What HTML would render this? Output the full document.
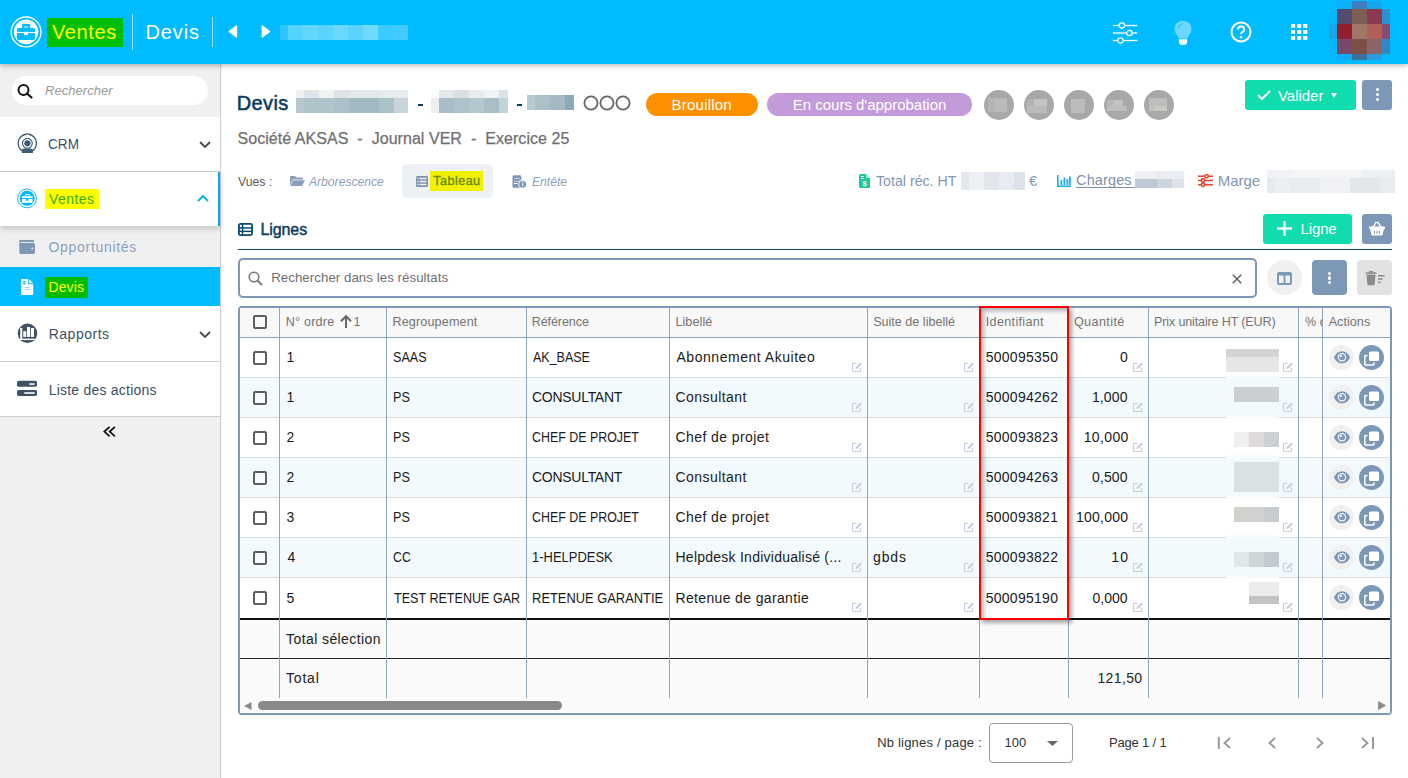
<!DOCTYPE html><html><head><meta charset="utf-8"><style>
html,body{margin:0;padding:0;width:1408px;height:778px;overflow:hidden;background:#fff;font-family:"Liberation Sans",sans-serif;}
.a{position:absolute;box-sizing:border-box;}
.t{position:absolute;white-space:nowrap;}
svg.a{overflow:visible}
</style></head><body><div class="a" style="left:0px;top:64px;width:220px;height:714px;background:#F0F0F0;"></div>
<div class="a" style="left:220px;top:64px;width:1px;height:714px;background:#CFCFCF;box-shadow:1px 0 2px rgba(0,0,0,0.06)"></div>
<div class="a" style="left:12px;top:76px;width:196px;height:29px;background:#fff;border-radius:15px"></div>
<svg class="a" style="left:17px;top:84px" width="16" height="14" viewBox="0 0 16 14"><circle cx="6.5" cy="6" r="5" fill="none" stroke="#111" stroke-width="2"/><line x1="10" y1="9.5" x2="14.5" y2="13.5" stroke="#111" stroke-width="2.2" stroke-linecap="round"/></svg>
<div class="t" style="left:45.00px;top:84.20px;font-size:13px;line-height:13px;color:#9A9A9A;font-weight:400;font-style:italic;letter-spacing:0.056px;">Rechercher</div>
<div class="a" style="left:0px;top:117px;width:220px;height:54px;background:#fff;"></div>
<div class="a" style="left:0px;top:171px;width:220px;height:1px;background:#CFCFCF;"></div>
<svg class="a" style="left:17px;top:133px" width="21" height="21" viewBox="0 0 21 21"><circle cx="10.3" cy="10.2" r="9.2" fill="none" stroke="#3F5666" stroke-width="1.3"/><circle cx="10.4" cy="10.3" r="4.9" fill="none" stroke="#3F5666" stroke-width="1.1"/><circle cx="10.4" cy="10.3" r="3.1" fill="#3F5E75"/><path d="M4.8 20 L4.8 17.6 Q4.8 15.4 7 15.4 L13.8 15.4 Q16 15.4 16 17.6 L16 20 Z" fill="#3F5E75"/><path d="M10.3 1 Q11.5 3 10.3 5.2" fill="none" stroke="#fff" stroke-width="0.9"/></svg>
<div class="t" style="left:48.30px;top:137.35px;font-size:14px;line-height:14px;color:#3C5064;font-weight:400;font-style:normal;letter-spacing:0.000px;transform:scaleX(0.9700);transform-origin:1px 0;">CRM</div>
<svg class="a" style="left:199px;top:141px" width="12" height="7" viewBox="0 0 12 7"><polyline points="1,1 6,6 11,1" fill="none" stroke="#3E4B57" stroke-width="1.8"/></svg>
<div class="a" style="left:0px;top:172px;width:220px;height:54px;background:#fff;box-shadow:0 3px 6px rgba(0,0,0,0.18)"></div>
<div class="a" style="left:218px;top:172px;width:2px;height:54px;background:#00AEEF;"></div>
<svg class="a" style="left:17px;top:188px" width="21" height="21" viewBox="0 0 21 21"><circle cx="10" cy="10.4" r="9.4" fill="none" stroke="#1AB8F8" stroke-width="1"/><circle cx="10.2" cy="10.35" r="7.5" fill="#00B8FF"/><rect x="5" y="8.2" width="10.6" height="1.9" fill="#fff"/><rect x="5" y="11" width="10.6" height="3.7" rx="0.5" fill="#fff"/><rect x="8.2" y="6" width="4.5" height="2.4" rx="0.8" fill="#fff"/><rect x="8.9" y="7" width="3" height="1.1" fill="#00B8FF"/><rect x="8.9" y="9.9" width="2.5" height="2.8" rx="0.5" fill="#00B8FF"/></svg>
<div class="a" style="left:45px;top:189px;width:54px;height:20px;background:#FFFF00;"></div>
<div class="t" style="left:49.00px;top:191.95px;font-size:14px;line-height:14px;color:#3DAA00;font-weight:400;font-style:normal;letter-spacing:0.440px;">Ventes</div>
<svg class="a" style="left:197px;top:194px" width="12" height="8" viewBox="0 0 12 8"><polyline points="1,7 6,2 11,7" fill="none" stroke="#00AEEF" stroke-width="1.8"/></svg>
<svg class="a" style="left:19px;top:240px" width="16" height="14" viewBox="0 0 16 14"><rect x="0.35" y="0" width="14.8" height="1.9" rx="0.8" fill="#7D97B6"/><rect x="0.35" y="3" width="15.6" height="10.9" rx="1.6" fill="#7D97B6"/><rect x="0.35" y="0.5" width="1.2" height="4" fill="#7D97B6"/><circle cx="13.2" cy="8.4" r="0.9" fill="#EAF2F6"/></svg>
<div class="t" style="left:48.50px;top:240.15px;font-size:14px;line-height:14px;color:#8AA0C0;font-weight:400;font-style:normal;letter-spacing:0.700px;">Opportunités</div>
<div class="a" style="left:0px;top:267px;width:220px;height:39px;background:#00BBFF;"></div>
<svg class="a" style="left:21px;top:279px" width="13" height="16" viewBox="0 0 13 16"><path d="M0 1 Q0 0 1 0 L7.2 0 L7.2 5.3 L12.2 5.3 L12.2 15 Q12.2 16 11.2 16 L1 16 Q0 16 0 15 Z" fill="#fff"/><path d="M8.2 0.3 L12.2 4.3 L8.2 4.3 Z" fill="#fff"/><g fill="#00BBFF"><rect x="1.8" y="2" width="3" height="1.2" rx="0.5"/><rect x="1.8" y="4.1" width="3" height="1.2" rx="0.5"/></g><g fill="#8FDDFF"><rect x="3.7" y="8" width="5.2" height="1"/><rect x="3.7" y="10" width="5.2" height="1"/></g></svg>
<div class="a" style="left:45px;top:277px;width:43px;height:21px;background:#00BB00;"></div>
<div class="t" style="left:48.50px;top:280.15px;font-size:14px;line-height:14px;color:#FFFF00;font-weight:400;font-style:normal;letter-spacing:0.100px;">Devis</div>
<div class="a" style="left:0px;top:306px;width:220px;height:55px;background:#fff;"></div>
<div class="a" style="left:0px;top:361px;width:220px;height:1px;background:#CFCFCF;"></div>
<svg class="a" style="left:17px;top:323px" width="21" height="21" viewBox="0 0 21 21"><circle cx="10.5" cy="10.3" r="9.75" fill="#3E5466"/><g fill="#fff"><rect x="3.2" y="4.9" width="2.1" height="12"/><rect x="3.2" y="15.6" width="14.4" height="1.5"/><rect x="6.3" y="8.2" width="2.9" height="5.7"/><rect x="10" y="4" width="3.1" height="9.9"/><rect x="13.9" y="5" width="3.1" height="8.9"/></g></svg>
<div class="t" style="left:48.70px;top:326.75px;font-size:14px;line-height:14px;color:#3C5064;font-weight:400;font-style:normal;letter-spacing:0.514px;">Rapports</div>
<svg class="a" style="left:199px;top:331px" width="12" height="7" viewBox="0 0 12 7"><polyline points="1,1 6,6 11,1" fill="none" stroke="#3E4B57" stroke-width="1.8"/></svg>
<div class="a" style="left:0px;top:362px;width:220px;height:54px;background:#fff;"></div>
<div class="a" style="left:0px;top:416px;width:220px;height:1px;background:#CFCFCF;"></div>
<svg class="a" style="left:17px;top:381px" width="20" height="15" viewBox="0 0 20 15"><rect x="0" y="-0.2" width="20" height="6" rx="1.6" fill="#3E5466"/><rect x="0" y="8.9" width="20" height="6" rx="1.6" fill="#3E5466"/><rect x="12.3" y="2.3" width="5.3" height="1.5" fill="#fff"/><rect x="7.3" y="11.2" width="10.3" height="1.6" fill="#fff"/></svg>
<div class="t" style="left:48.70px;top:382.55px;font-size:14px;line-height:14px;color:#3C5064;font-weight:400;font-style:normal;letter-spacing:0.219px;">Liste des actions</div>
<svg class="a" style="left:102px;top:425px" width="14" height="13" viewBox="0 0 14 13"><polyline points="7.6,1.9 2.4,6.6 7.6,11.3" fill="none" stroke="#111" stroke-width="1.8"/><polyline points="12.9,1.9 7.7,6.6 12.9,11.3" fill="none" stroke="#111" stroke-width="1.8"/></svg>
<div class="a" style="left:0px;top:0px;width:1408px;height:64px;background:#00BBFF;box-shadow:0 2px 5px rgba(0,0,0,0.25);z-index:5"></div>
<div class="a" style="left:0;top:0;width:1408px;height:64px;z-index:6">
<svg class="a" style="left:10px;top:16px" width="32" height="32" viewBox="0 0 32 32"><circle cx="16.1" cy="15.9" r="14.9" fill="none" stroke="#fff" stroke-width="1.3"/><circle cx="16.05" cy="15.85" r="12.3" fill="#fff"/><rect x="11.9" y="8" width="8.3" height="4.5" rx="1.4" fill="#00BBFF"/><rect x="13.7" y="10.1" width="4.4" height="1.8" fill="#8EE0FF"/><rect x="7" y="11.9" width="17.9" height="3.9" rx="1.4" fill="#00BBFF"/><rect x="7" y="13.5" width="17.9" height="2.3" fill="#00BBFF"/><rect x="7" y="17" width="17.9" height="6.9" rx="1.4" fill="#00BBFF"/><rect x="7" y="17" width="17.9" height="3" fill="#00BBFF"/><rect x="14" y="15.8" width="3.9" height="3.3" fill="#fff"/></svg>
<div class="a" style="left:47px;top:18px;width:76px;height:29px;background:#00BF00;"></div>
<div class="t" style="left:52.00px;top:22.07px;font-size:20px;line-height:20px;color:#FFFF00;font-weight:400;font-style:normal;letter-spacing:0.600px;">Ventes</div>
<div class="a" style="left:132px;top:14px;width:1px;height:36px;background:rgba(255,255,255,0.6);"></div>
<div class="t" style="left:145.50px;top:22.07px;font-size:20px;line-height:20px;color:#fff;font-weight:400;font-style:normal;letter-spacing:0.875px;">Devis</div>
<div class="a" style="left:212px;top:17px;width:1px;height:30px;background:rgba(255,255,255,0.6);"></div>
<svg class="a" style="left:228px;top:25px" width="10" height="13" viewBox="0 0 10 13"><path d="M8.5 1 L8.5 12 L1.2 6.5 Z" fill="#fff" stroke="#fff" stroke-width="1.4" stroke-linejoin="round"/></svg>
<svg class="a" style="left:261px;top:25px" width="10" height="13" viewBox="0 0 10 13"><path d="M1.3 1 L1.3 12 L8.6 6.5 Z" fill="#fff" stroke="#fff" stroke-width="1.4" stroke-linejoin="round"/></svg>
<div class="a" style="left:280px;top:25px;width:128px;height:15px;background:linear-gradient(90deg,#2DC4FF 0.4px 8.2px,#55D3FF 8.2px 23.1px,#62D6FF 23.1px 38.0px,#5AD3FF 38.0px 52.9px,#6AD8FF 52.9px 67.8px,#5AD3FF 67.8px 82.8px,#6FDAFF 82.8px 98.0px,#3ACAFF 98.0px 113.3px,#41CBFF 113.3px 128.2px);"></div>
<svg class="a" style="left:1112px;top:22px" width="26" height="22" viewBox="0 0 26 22"><g stroke="#fff" stroke-width="1.3" fill="none"><line x1="0.8" y1="3.5" x2="25.3" y2="3.5"/><line x1="0.8" y1="18.5" x2="25.3" y2="18.5"/></g><line x1="0.8" y1="11" x2="25.3" y2="11" stroke="#A6E6FF" stroke-width="2.2"/><g stroke="#fff" stroke-width="1.2" fill="#00BBFF"><circle cx="9.9" cy="3.5" r="2.7"/><circle cx="17.4" cy="11" r="2.7"/><circle cx="8.5" cy="18.5" r="2.7"/></g></svg>
<svg class="a" style="left:1174px;top:20px" width="18" height="26" viewBox="0 0 18 26"><path d="M9 0.7 C4.2 0.7 0.5 4.3 0.5 8.9 C0.5 12.3 2.6 14.3 4 16.6 L4.9 18.5 L13.1 18.5 L14 16.6 C15.4 14.3 17.5 12.3 17.5 8.9 C17.5 4.3 13.8 0.7 9 0.7 Z" fill="#6ED6FF"/><path d="M4.9 19.2 L13.1 19.2 L13.1 21.8 Q13.1 25 9 25 Q4.9 25 4.9 21.8 Z" fill="#fff"/><path d="M4.2 8.3 Q4.6 4.6 8.5 3.6" fill="none" stroke="#00BBFF" stroke-width="0.9" stroke-linecap="round"/></svg>
<svg class="a" style="left:1230px;top:21px" width="22" height="22" viewBox="0 0 22 22"><circle cx="11" cy="11" r="9.5" fill="none" stroke="#fff" stroke-width="2"/><path d="M7.8 8.6 Q7.8 5.6 11 5.6 Q14.2 5.6 14.2 8.4 Q14.2 10.2 12.3 11.2 Q11 11.9 11 13.3" fill="none" stroke="#fff" stroke-width="2"/><circle cx="11" cy="16.2" r="1.2" fill="#fff"/></svg>
<svg class="a" style="left:1291px;top:24px" width="17" height="16" viewBox="0 0 17 16"><rect x="0.0" y="0.0" width="4.1" height="3.9" fill="#fff"/><rect x="6.1" y="0.0" width="4.1" height="3.9" fill="#fff"/><rect x="12.2" y="0.0" width="4.1" height="3.9" fill="#fff"/><rect x="0.0" y="6.0" width="4.1" height="3.9" fill="#fff"/><rect x="6.1" y="6.0" width="4.1" height="3.9" fill="#fff"/><rect x="12.2" y="6.0" width="4.1" height="3.9" fill="#fff"/><rect x="0.0" y="12.0" width="4.1" height="3.9" fill="#fff"/><rect x="6.1" y="12.0" width="4.1" height="3.9" fill="#fff"/><rect x="12.2" y="12.0" width="4.1" height="3.9" fill="#fff"/></svg>
<div class="a" style="left:1337px;top:1px;width:15px;height:8px;background:#0AB1F6;"></div>
<div class="a" style="left:1352px;top:1px;width:15px;height:8px;background:#3A80C0;"></div>
<div class="a" style="left:1367px;top:1px;width:15px;height:8px;background:#17A6EC;"></div>
<div class="a" style="left:1329px;top:9px;width:8px;height:15px;background:#05B7FD;"></div>
<div class="a" style="left:1337px;top:9px;width:15px;height:15px;background:#554B6F;"></div>
<div class="a" style="left:1352px;top:9px;width:15px;height:15px;background:#7E5E54;"></div>
<div class="a" style="left:1367px;top:9px;width:15px;height:15px;background:#8A3B4F;"></div>
<div class="a" style="left:1382px;top:9px;width:8px;height:15px;background:#2E8FD0;"></div>
<div class="a" style="left:1329px;top:24px;width:8px;height:15px;background:#16A5EB;"></div>
<div class="a" style="left:1337px;top:24px;width:15px;height:15px;background:#921F2E;"></div>
<div class="a" style="left:1352px;top:24px;width:15px;height:15px;background:#A27569;"></div>
<div class="a" style="left:1367px;top:24px;width:15px;height:15px;background:#B05F5B;"></div>
<div class="a" style="left:1382px;top:24px;width:8px;height:15px;background:#8A4A72;"></div>
<div class="a" style="left:1329px;top:39px;width:8px;height:15px;background:#07B6FC;"></div>
<div class="a" style="left:1337px;top:39px;width:15px;height:15px;background:#7C486A;"></div>
<div class="a" style="left:1352px;top:39px;width:15px;height:15px;background:#7C5048;"></div>
<div class="a" style="left:1367px;top:39px;width:15px;height:15px;background:#8A6668;"></div>
<div class="a" style="left:1382px;top:39px;width:8px;height:15px;background:#3586C6;"></div>
<div class="a" style="left:1337px;top:54px;width:15px;height:6px;background:#10ADF2;"></div>
<div class="a" style="left:1352px;top:54px;width:15px;height:6px;background:#3D739B;"></div>
<div class="a" style="left:1367px;top:54px;width:15px;height:6px;background:#2A9BDB;"></div>
</div>
<div class="t" style="left:236.75px;top:92.77px;font-size:20px;line-height:20px;color:#0B3C5D;font-weight:400;font-style:normal;letter-spacing:0.375px;-webkit-text-stroke:0.55px #0B3C5D;">Devis</div>
<div class="a" style="left:296px;top:90px;width:112px;height:8px;background:linear-gradient(90deg,#EEF1F1 0 8px,#DEE5EA 8px 23px,#F0F3F3 23px 38px,#DDE4E8 38px 53px,#E3E8EB 53px 83px,#E6EBEE 83px 112px);"></div>
<div class="a" style="left:296px;top:98px;width:112px;height:15px;background:linear-gradient(90deg,#B6C8CE 0 8px,#B0C3CA 8px 38px,#ABC0C8 38px 53px,#A3B9C1 53px 83px,#ACC1C8 83px 98px,#C8D5DA 98px 112px);"></div>
<div class="a" style="left:418px;top:103.5px;width:5px;height:2px;background:#0B3C5D;"></div>
<div class="a" style="left:439px;top:90px;width:69px;height:8px;background:linear-gradient(90deg,#E3E8EB 0 15px,#D6DFE4 15px 30px,#E6ECEF 30px 45px,#F0F3F3 45px 60px,#D9E2E7 60px 69px);"></div>
<div class="a" style="left:431px;top:98px;width:8px;height:15px;background:#EDEEEE;"></div>
<div class="a" style="left:439px;top:98px;width:69px;height:15px;background:linear-gradient(90deg,#A8BDC8 0 15px,#AEC2CA 15px 30px,#B5C7CE 30px 45px,#AABEC6 45px 60px,#C3D3DA 60px 69px);"></div>
<div class="a" style="left:516.5px;top:103.5px;width:5px;height:2px;background:#0B3C5D;"></div>
<div class="a" style="left:527px;top:95px;width:47px;height:15px;background:linear-gradient(90deg,#B9CBD1 0 8px,#ABC0C8 8px 23px,#A4BAC3 23px 38px,#8CA9B7 38px 47px);"></div>
<svg class="a" style="left:583px;top:95px" width="16" height="16" viewBox="0 0 16 16"><circle cx="8" cy="8" r="6.6" fill="none" stroke="#666" stroke-width="1.8"/></svg>
<svg class="a" style="left:599px;top:95px" width="16" height="16" viewBox="0 0 16 16"><circle cx="8" cy="8" r="6.6" fill="none" stroke="#666" stroke-width="1.8"/></svg>
<svg class="a" style="left:615px;top:95px" width="16" height="16" viewBox="0 0 16 16"><circle cx="8" cy="8" r="6.6" fill="none" stroke="#666" stroke-width="1.8"/></svg>
<div class="a" style="left:646px;top:93px;width:112px;height:23px;background:#FF9100;border-radius:12px"></div>
<div class="t" style="left:671.60px;top:97.30px;font-size:15px;line-height:15px;color:#fff;font-weight:400;font-style:normal;letter-spacing:0.213px;">Brouillon</div>
<div class="a" style="left:767px;top:93px;width:205px;height:23px;background:#C39BDB;border-radius:12px"></div>
<div class="t" style="left:792.80px;top:97.30px;font-size:15px;line-height:15px;color:#fff;font-weight:400;font-style:normal;letter-spacing:-0.014px;">En cours d'approbation</div>
<div class="a" style="left:984px;top:90px;width:30px;height:30px;background:#A8A8A8;border-radius:50%"></div>
<div class="a" style="left:988px;top:98px;width:7px;height:14px;background:#B5B5B5;"></div>
<div class="a" style="left:995px;top:98px;width:12px;height:14px;background:#BBBBBB;"></div>
<div class="a" style="left:1024px;top:90px;width:30px;height:30px;background:#A8A8A8;border-radius:50%"></div>
<div class="a" style="left:1027px;top:99px;width:7px;height:7px;background:#B3B3B3;"></div>
<div class="a" style="left:1034px;top:99px;width:13px;height:7px;background:#C4C4C4;"></div>
<div class="a" style="left:1027px;top:106px;width:20px;height:7px;background:#BBBBBB;"></div>
<div class="a" style="left:1064px;top:90px;width:30px;height:30px;background:#A8A8A8;border-radius:50%"></div>
<div class="a" style="left:1071px;top:99px;width:7px;height:14px;background:#BBBDBF;"></div>
<div class="a" style="left:1078px;top:99px;width:7px;height:14px;background:#BDBBB8;"></div>
<div class="a" style="left:1104px;top:90px;width:30px;height:30px;background:#A8A8A8;border-radius:50%"></div>
<div class="a" style="left:1107px;top:100px;width:6px;height:6px;background:#B8B8B8;"></div>
<div class="a" style="left:1113px;top:100px;width:10px;height:6px;background:#C3C3C3;"></div>
<div class="a" style="left:1107px;top:106px;width:17px;height:5px;background:#BEC0C0;"></div>
<div class="a" style="left:1124px;top:106px;width:3px;height:5px;background:#BBBBBB;"></div>
<div class="a" style="left:1144px;top:90px;width:30px;height:30px;background:#A8A8A8;border-radius:50%"></div>
<div class="a" style="left:1149px;top:98px;width:18px;height:8px;background:#BEBEBE;"></div>
<div class="a" style="left:1149px;top:106px;width:6px;height:5px;background:#C0C2C6;"></div>
<div class="a" style="left:1155px;top:106px;width:12px;height:5px;background:#CACAC4;"></div>
<div class="a" style="left:1245px;top:80px;width:111px;height:30px;background:#10DCAE;border-radius:3px"></div>
<svg class="a" style="left:1257px;top:90px" width="14" height="10" viewBox="0 0 14 10"><polyline points="1,5 5,9 13,1" fill="none" stroke="#fff" stroke-width="2"/></svg>
<div class="t" style="left:1278.00px;top:88.10px;font-size:15px;line-height:15px;color:#fff;font-weight:400;font-style:normal;letter-spacing:-0.033px;">Valider</div>
<svg class="a" style="left:1331px;top:93px" width="6" height="5" viewBox="0 0 6 5"><path d="M0 0 L6 0 L3 5 Z" fill="#fff"/></svg>
<div class="a" style="left:1362px;top:80px;width:30px;height:30px;background:#7D97B6;border-radius:3px"></div>
<div class="a" style="left:1375.5px;top:87.8px;width:3.4px;height:3.4px;background:#fff;border-radius:50%"></div>
<div class="a" style="left:1375.5px;top:92.8px;width:3.4px;height:3.4px;background:#fff;border-radius:50%"></div>
<div class="a" style="left:1375.5px;top:97.8px;width:3.4px;height:3.4px;background:#fff;border-radius:50%"></div>
<div class="t" style="left:237.50px;top:130.86px;font-size:16px;line-height:16px;color:#6F6F6F;font-weight:400;font-style:normal;letter-spacing:0.043px;-webkit-text-stroke:0.25px #6F6F6F;">Société AKSAS&nbsp; -&nbsp; Journal VER&nbsp; -&nbsp; Exercice 25</div>
<div class="t" style="left:238.00px;top:174.80px;font-size:13px;line-height:13px;color:#5A5A5A;font-weight:400;font-style:normal;letter-spacing:0.000px;transform:scaleX(0.9429);transform-origin:0px 0;">Vues :</div>
<svg class="a" style="left:290px;top:176px" width="15" height="10" viewBox="0 0 15 10"><path d="M0 1 Q0 0 1 0 L5 0 L6.5 1.5 L12 1.5 Q13 1.5 13 2.5 L13 3.5 L3 3.5 L0 9 Z" fill="#8AA0BE"/><path d="M3.3 4.3 L15 4.3 L12 10 L0.3 10 Z" fill="#8AA0BE"/></svg>
<div class="t" style="left:309.00px;top:175.00px;font-size:13px;line-height:13px;color:#8CA0BC;font-weight:400;font-style:italic;letter-spacing:0.000px;transform:scaleX(0.9325);transform-origin:0px 0;">Arborescence</div>
<div class="a" style="left:402px;top:164px;width:91px;height:34px;background:#EDF0F5;border-radius:5px"></div>
<svg class="a" style="left:416px;top:176px" width="12" height="11" viewBox="0 0 12 11"><rect x="0" y="0" width="12" height="11" rx="1.5" fill="#7A8FAE"/><g fill="#EDF0F5"><rect x="3.5" y="1.7" width="7" height="1.6"/><rect x="3.5" y="4.7" width="7" height="1.6"/><rect x="3.5" y="7.7" width="7" height="1.6"/><rect x="1.2" y="1.7" width="1.3" height="1.6"/><rect x="1.2" y="4.7" width="1.3" height="1.6"/><rect x="1.2" y="7.7" width="1.3" height="1.6"/></g></svg>
<div class="a" style="left:430px;top:171px;width:53px;height:20px;background:#EEF200;"></div>
<div class="t" style="left:433.20px;top:175.33px;font-size:12.6px;line-height:12.6px;color:#6F8A0A;font-weight:400;font-style:normal;letter-spacing:0.467px;-webkit-text-stroke:0.35px #6F8A0A;">Tableau</div>
<svg class="a" style="left:512px;top:175px" width="15" height="13" viewBox="0 0 15 13"><rect x="0.5" y="0.2" width="8.9" height="12.5" rx="1.5" fill="#7D97B6"/><rect x="2" y="3.1" width="6" height="0.9" fill="#C9D5E3"/><rect x="2" y="5.8" width="6" height="0.9" fill="#C9D5E3"/><rect x="2" y="8" width="3.5" height="1" fill="#fff"/><circle cx="10.7" cy="9.2" r="4.4" fill="#fff"/><circle cx="10.7" cy="9.2" r="3.5" fill="#7D97B6"/><rect x="10.2" y="8.4" width="1" height="2.9" fill="#fff"/><circle cx="10.7" cy="7.2" r="0.65" fill="#fff"/></svg>
<div class="t" style="left:531.50px;top:175.00px;font-size:13px;line-height:13px;color:#8CA0BC;font-weight:400;font-style:italic;letter-spacing:0.000px;transform:scaleX(0.9324);transform-origin:0px 0;">Entête</div>
<svg class="a" style="left:859px;top:174px" width="11" height="14" viewBox="0 0 11 14"><path d="M0 1.5 Q0 0 1.5 0 L7 0 L11 4 L11 12.5 Q11 14 9.5 14 L1.5 14 Q0 14 0 12.5 Z" fill="#1DCB9A"/><path d="M7 0 L7 4 L11 4" fill="#9EEBD4"/><rect x="2" y="2" width="3" height="1" fill="#fff"/><rect x="2" y="4" width="3" height="1" fill="#fff"/><text x="5.5" y="12.3" font-size="7.5" font-weight="700" fill="#fff" text-anchor="middle" font-family="Liberation Sans">$</text></svg>
<div class="t" style="left:876.40px;top:173.30px;font-size:15px;line-height:15px;color:#8297B5;font-weight:400;font-style:normal;letter-spacing:0.000px;transform:scaleX(0.9459);transform-origin:0px 0;">Total réc. HT</div>
<div class="a" style="left:961px;top:172px;width:64px;height:18px;background:linear-gradient(90deg,#E4E7EC 0 8px,#EEF1F4 8px 23px,#E2E6EC 23px 38px,#E8EBEF 38px 53px,#DDE2E8 53px 64px);"></div>
<div class="t" style="left:1029.00px;top:173.30px;font-size:15px;line-height:15px;color:#8297B5;font-weight:400;font-style:normal;letter-spacing:0.000px;">€</div>
<svg class="a" style="left:1057px;top:175px" width="14" height="12" viewBox="0 0 14 12"><path d="M0.8 0 L0.8 11.2 L14 11.2" fill="none" stroke="#1AAEF0" stroke-width="1.6"/><rect x="3.5" y="5" width="1.8" height="5" fill="#1AAEF0"/><rect x="6.5" y="2.5" width="1.8" height="7.5" fill="#1AAEF0"/><rect x="9.5" y="4" width="1.8" height="6" fill="#1AAEF0"/><rect x="12" y="1.5" width="1.8" height="8.5" fill="#1AAEF0"/></svg>
<div class="t" style="left:1076.10px;top:173.43px;font-size:14.5px;line-height:14.5px;color:#7C93B2;font-weight:400;font-style:normal;letter-spacing:0.117px;">Charges</div>
<div class="a" style="left:1076px;top:187px;width:59px;height:1px;background:#7C93B2;"></div>
<div class="a" style="left:1135px;top:171px;width:49px;height:8px;background:linear-gradient(90deg,#EEF0F3 0 22px,#E9ECF0 22px 49px);"></div>
<div class="a" style="left:1135px;top:179px;width:49px;height:9px;background:linear-gradient(90deg,#BFC9D6 0 22px,#CCD4DE 22px 37px,#DEE3EA 37px 49px);"></div>
<svg class="a" style="left:1198px;top:174px" width="15" height="13" viewBox="0 0 15 13"><g stroke="#E8402A" stroke-width="1.5" fill="none"><line x1="0" y1="2.2" x2="15" y2="2.2"/><line x1="0" y1="6.5" x2="15" y2="6.5"/><line x1="0" y1="10.8" x2="15" y2="10.8"/><circle cx="8.5" cy="2.2" r="1.7" fill="#fff"/><circle cx="5" cy="6.5" r="1.7" fill="#fff"/><circle cx="5" cy="10.8" r="1.7" fill="#fff"/></g></svg>
<div class="t" style="left:1217.80px;top:173.30px;font-size:15px;line-height:15px;color:#8297B5;font-weight:400;font-style:normal;letter-spacing:-0.050px;">Marge</div>
<div class="a" style="left:1267px;top:170px;width:128px;height:8px;background:linear-gradient(90deg,#F0F2F5 0 25px,#F3F5F7 25px 95px,#EDF0F3 95px 128px);"></div>
<div class="a" style="left:1267px;top:178px;width:128px;height:15px;background:linear-gradient(90deg,#E6E9EE 0 8px,#ECEEF2 8px 23px,#E8EBEF 23px 53px,#EFF1F4 53px 83px,#E3E7EC 83px 113px,#E8EBEF 113px 128px);"></div>
<svg class="a" style="left:238px;top:223px" width="15" height="13" viewBox="0 0 15 13"><rect x="0.9" y="0.9" width="13.2" height="11.2" rx="1.5" fill="none" stroke="#0B4A6E" stroke-width="1.8"/><g fill="#0B4A6E"><rect x="1" y="4.2" width="13" height="1.5"/><rect x="1" y="7.6" width="13" height="1.5"/><rect x="3.8" y="1" width="1.5" height="11"/></g></svg>
<div class="t" style="left:260.50px;top:221.76px;font-size:16px;line-height:16px;color:#0B3C5D;font-weight:400;font-style:normal;letter-spacing:-0.100px;-webkit-text-stroke:0.45px #0B3C5D;">Lignes</div>
<div class="a" style="left:238px;top:248.5px;width:1154px;height:1.5px;background:#0D4A6B;"></div>
<div class="a" style="left:1263px;top:214px;width:89px;height:30px;background:#10DCAE;border-radius:3px"></div>
<svg class="a" style="left:1277px;top:221px" width="15" height="15" viewBox="0 0 15 15"><rect x="6.3" y="0" width="2.4" height="15" fill="#fff"/><rect x="0" y="6.3" width="15" height="2.4" fill="#fff"/></svg>
<div class="t" style="left:1300.60px;top:221.30px;font-size:15px;line-height:15px;color:#fff;font-weight:400;font-style:normal;letter-spacing:-0.150px;">Ligne</div>
<div class="a" style="left:1362px;top:214px;width:30px;height:30px;background:#7D97B6;border-radius:3px"></div>
<svg class="a" style="left:1369px;top:221px" width="16" height="15" viewBox="0 0 16 15"><path d="M4 6 L7.5 0.8 M12 6 L8.5 0.8" stroke="#fff" stroke-width="1.5" fill="none"/><rect x="0" y="5.5" width="16" height="2.5" rx="0.8" fill="#fff"/><path d="M1 8 L15 8 L13.3 14.5 L2.7 14.5 Z" fill="#fff"/><g fill="#7D97B6"><rect x="5" y="9.8" width="1" height="3"/><rect x="7.5" y="9.8" width="1" height="3"/><rect x="10" y="9.8" width="1" height="3"/></g></svg>
<div class="a" style="left:238px;top:258px;width:1019px;height:40px;background:#fff;border:2px solid #7D97B6;border-radius:5px"></div>
<svg class="a" style="left:248px;top:271px" width="15" height="15" viewBox="0 0 15 15"><circle cx="6" cy="6" r="4.8" fill="none" stroke="#777" stroke-width="1.6"/><line x1="9.5" y1="9.5" x2="14" y2="14" stroke="#777" stroke-width="1.8"/></svg>
<div class="t" style="left:271.20px;top:270.54px;font-size:13.3px;line-height:13.3px;color:#6F6F6F;font-weight:400;font-style:normal;letter-spacing:0.036px;">Rechercher dans les résultats</div>
<svg class="a" style="left:1232px;top:273.5px" width="10" height="10" viewBox="0 0 10 10"><path d="M0.8 0.8 L9.2 9.2 M9.2 0.8 L0.8 9.2" stroke="#555" stroke-width="1.3"/></svg>
<div class="a" style="left:1267px;top:260px;width:35px;height:35px;background:#F0F0F0;border-radius:50%"></div>
<svg class="a" style="left:1277px;top:271.5px" width="15" height="13" viewBox="0 0 15 13"><rect x="1" y="1" width="13" height="11" rx="1" fill="none" stroke="#7D97B6" stroke-width="2"/><rect x="1" y="1" width="13" height="2.5" fill="#7D97B6"/><rect x="6.6" y="1" width="1.8" height="11" fill="#7D97B6"/></svg>
<div class="a" style="left:1312px;top:260px;width:35px;height:35px;background:#7D97B6;border-radius:4px"></div>
<div class="a" style="left:1328px;top:272.1px;width:3.4px;height:3.4px;background:#fff;border-radius:50%"></div>
<div class="a" style="left:1328px;top:276.3px;width:3.4px;height:3.4px;background:#fff;border-radius:50%"></div>
<div class="a" style="left:1328px;top:280.5px;width:3.4px;height:3.4px;background:#fff;border-radius:50%"></div>
<div class="a" style="left:1357px;top:260px;width:35px;height:35px;background:#E2E2E2;border-radius:4px"></div>
<svg class="a" style="left:1365px;top:271px" width="20" height="15" viewBox="0 0 20 15"><rect x="0.5" y="1.2" width="11" height="1.6" rx="0.6" fill="#8A8A8A"/><rect x="4" y="0" width="4" height="1.5" fill="#8A8A8A"/><path d="M1.5 3.5 L10.5 3.5 L9.5 14.3 L2.5 14.3 Z" fill="#8A8A8A"/><rect x="13" y="4" width="6.5" height="1.5" fill="#8A8A8A"/><rect x="13" y="7.3" width="4.5" height="1.5" fill="#8A8A8A"/><rect x="13" y="10.6" width="2.5" height="1.5" fill="#8A8A8A"/></svg>
<div class="a" style="left:238px;top:306px;width:1154px;height:409px;background:#fff;border:2px solid #7D97B6;border-radius:4px"></div>
<div class="a" style="left:240px;top:308px;width:1150px;height:29px;background:#F8F8F8;"></div>
<div class="a" style="left:240px;top:337px;width:1150px;height:1px;background:#8FA6C3;"></div>
<div class="a" style="left:240px;top:377px;width:1150px;height:1px;background:#DADEE1;"></div>
<div class="a" style="left:240px;top:378px;width:1150px;height:39px;background:#F2FAFD;"></div>
<div class="a" style="left:240px;top:417px;width:1150px;height:1px;background:#DADEE1;"></div>
<div class="a" style="left:240px;top:457px;width:1150px;height:1px;background:#DADEE1;"></div>
<div class="a" style="left:240px;top:458px;width:1150px;height:39px;background:#F2FAFD;"></div>
<div class="a" style="left:240px;top:497px;width:1150px;height:1px;background:#DADEE1;"></div>
<div class="a" style="left:240px;top:537px;width:1150px;height:1px;background:#DADEE1;"></div>
<div class="a" style="left:240px;top:538px;width:1150px;height:39px;background:#F2FAFD;"></div>
<div class="a" style="left:240px;top:577px;width:1150px;height:1px;background:#DADEE1;"></div>
<div class="a" style="left:240px;top:618px;width:1150px;height:2px;background:#111;"></div>
<div class="a" style="left:240px;top:620px;width:1150px;height:93px;background:#FAFAFA;"></div>
<div class="a" style="left:240px;top:658px;width:1150px;height:1px;background:#222;"></div>
<div class="a" style="left:279px;top:308px;width:1px;height:390px;background:#8FA6C3;"></div>
<div class="a" style="left:386px;top:308px;width:1px;height:390px;background:#8FA6C3;"></div>
<div class="a" style="left:526px;top:308px;width:1px;height:390px;background:#8FA6C3;"></div>
<div class="a" style="left:669px;top:308px;width:1px;height:390px;background:#8FA6C3;"></div>
<div class="a" style="left:867px;top:308px;width:1px;height:390px;background:#8FA6C3;"></div>
<div class="a" style="left:979px;top:308px;width:1px;height:390px;background:#8FA6C3;"></div>
<div class="a" style="left:1068px;top:308px;width:1px;height:390px;background:#8FA6C3;"></div>
<div class="a" style="left:1148px;top:308px;width:1px;height:390px;background:#8FA6C3;"></div>
<div class="a" style="left:1298px;top:308px;width:1px;height:390px;background:#8FA6C3;"></div>
<div class="a" style="left:1322px;top:308px;width:1px;height:390px;background:#8FA6C3;"></div>
<div class="a" style="left:253px;top:315px;width:14px;height:14px;background:transparent;border:2px solid #5F5F5F;border-radius:2px"></div>
<div class="t" style="left:285.70px;top:315.83px;font-size:12.6px;line-height:12.6px;color:#737373;font-weight:400;font-style:normal;letter-spacing:0.214px;">N° ordre</div>
<svg class="a" style="left:340px;top:315px" width="12" height="13" viewBox="0 0 12 13"><path d="M6 1.2 L6 13 M1 6.2 L6 1.2 L11 6.2" fill="none" stroke="#666" stroke-width="2"/></svg>
<div class="t" style="left:353.50px;top:315.83px;font-size:12.6px;line-height:12.6px;color:#737373;font-weight:400;font-style:normal;letter-spacing:0.000px;">1</div>
<div class="t" style="left:392.50px;top:315.83px;font-size:12.6px;line-height:12.6px;color:#737373;font-weight:400;font-style:normal;letter-spacing:0.136px;">Regroupement</div>
<div class="t" style="left:531.70px;top:315.83px;font-size:12.6px;line-height:12.6px;color:#737373;font-weight:400;font-style:normal;letter-spacing:-0.112px;">Référence</div>
<div class="t" style="left:675.40px;top:315.83px;font-size:12.6px;line-height:12.6px;color:#737373;font-weight:400;font-style:normal;letter-spacing:0.083px;">Libellé</div>
<div class="t" style="left:873.20px;top:315.83px;font-size:12.6px;line-height:12.6px;color:#737373;font-weight:400;font-style:normal;letter-spacing:-0.007px;">Suite de libellé</div>
<div class="t" style="left:985.80px;top:315.83px;font-size:12.6px;line-height:12.6px;color:#737373;font-weight:400;font-style:normal;letter-spacing:0.320px;">Identifiant</div>
<div class="t" style="left:1073.90px;top:315.83px;font-size:12.6px;line-height:12.6px;color:#737373;font-weight:400;font-style:normal;letter-spacing:0.400px;">Quantité</div>
<div class="t" style="left:1154.10px;top:315.83px;font-size:12.6px;line-height:12.6px;color:#737373;font-weight:400;font-style:normal;letter-spacing:-0.167px;">Prix unitaire HT (EUR)</div>
<div class="a" style="left:1299px;top:308px;width:23px;height:29px;overflow:hidden">
<div class="t" style="left:6.00px;top:7.83px;font-size:12.6px;line-height:12.6px;color:#737373;font-weight:400;font-style:normal;letter-spacing:0.000px;">% de</div>
</div>
<div class="t" style="left:1328.70px;top:315.83px;font-size:12.6px;line-height:12.6px;color:#737373;font-weight:400;font-style:normal;letter-spacing:0.033px;">Actions</div>
<div class="a" style="left:1226px;top:375px;width:53px;height:4px;background:#F8FBFC;"></div>
<div class="a" style="left:1226px;top:415px;width:53px;height:4px;background:#F8FBFC;"></div>
<div class="a" style="left:1226px;top:455px;width:53px;height:4px;background:#F8FBFC;"></div>
<div class="a" style="left:1226px;top:495px;width:53px;height:4px;background:#F8FBFC;"></div>
<div class="a" style="left:1226px;top:535px;width:53px;height:4px;background:#F8FBFC;"></div>
<div class="a" style="left:1226px;top:575px;width:53px;height:4px;background:#F8FBFC;"></div>
<div class="a" style="left:253px;top:350.5px;width:14px;height:14px;background:transparent;border:2px solid #5F5F5F;border-radius:2px"></div>
<div class="t" style="left:286.40px;top:350.15px;font-size:14px;line-height:14px;color:#1A1A1A;font-weight:400;font-style:normal;letter-spacing:0.000px;">1</div>
<div class="t" style="left:392.70px;top:350.15px;font-size:14px;line-height:14px;color:#1A1A1A;font-weight:400;font-style:normal;letter-spacing:0.000px;transform:scaleX(0.8972);transform-origin:1px 0;">SAAS</div>
<div class="t" style="left:533.00px;top:350.15px;font-size:14px;line-height:14px;color:#1A1A1A;font-weight:400;font-style:normal;letter-spacing:0.000px;transform:scaleX(0.8921);transform-origin:0px 0;">AK_BASE</div>
<div class="t" style="left:676.50px;top:350.15px;font-size:14px;line-height:14px;color:#1A1A1A;font-weight:400;font-style:normal;letter-spacing:0.529px;">Abonnement Akuiteo</div>
<div class="t" style="left:985.70px;top:350.15px;font-size:14px;line-height:14px;color:#1A1A1A;font-weight:400;font-style:normal;letter-spacing:0.275px;">500095350</div>
<div class="t" style="left:1120.00px;top:350.15px;font-size:14px;line-height:14px;color:#1A1A1A;font-weight:400;font-style:normal;letter-spacing:0.000px;">0</div>
<svg class="a" style="left:852px;top:362px" width="10" height="10" viewBox="0 0 10 10"><path d="M8.5 5.5 L8.5 9 Q8.5 9.5 8 9.5 L1 9.5 Q0.5 9.5 0.5 9 L0.5 2 Q0.5 1.5 1 1.5 L4.5 1.5" fill="none" stroke="#C5CFDB" stroke-width="1.1"/><path d="M3.5 7 L3.8 5 L8.3 0.5 L9.9 2.1 L5.4 6.6 Z" fill="#C5CFDB"/></svg>
<svg class="a" style="left:964px;top:362px" width="10" height="10" viewBox="0 0 10 10"><path d="M8.5 5.5 L8.5 9 Q8.5 9.5 8 9.5 L1 9.5 Q0.5 9.5 0.5 9 L0.5 2 Q0.5 1.5 1 1.5 L4.5 1.5" fill="none" stroke="#C5CFDB" stroke-width="1.1"/><path d="M3.5 7 L3.8 5 L8.3 0.5 L9.9 2.1 L5.4 6.6 Z" fill="#C5CFDB"/></svg>
<svg class="a" style="left:1133px;top:362px" width="10" height="10" viewBox="0 0 10 10"><path d="M8.5 5.5 L8.5 9 Q8.5 9.5 8 9.5 L1 9.5 Q0.5 9.5 0.5 9 L0.5 2 Q0.5 1.5 1 1.5 L4.5 1.5" fill="none" stroke="#C5CFDB" stroke-width="1.1"/><path d="M3.5 7 L3.8 5 L8.3 0.5 L9.9 2.1 L5.4 6.6 Z" fill="#C5CFDB"/></svg>
<svg class="a" style="left:1283px;top:362px" width="10" height="10" viewBox="0 0 10 10"><path d="M8.5 5.5 L8.5 9 Q8.5 9.5 8 9.5 L1 9.5 Q0.5 9.5 0.5 9 L0.5 2 Q0.5 1.5 1 1.5 L4.5 1.5" fill="none" stroke="#C5CFDB" stroke-width="1.1"/><path d="M3.5 7 L3.8 5 L8.3 0.5 L9.9 2.1 L5.4 6.6 Z" fill="#C5CFDB"/></svg>
<div class="a" style="left:1226px;top:349px;width:53px;height:8px;background:#D5D4D5;"></div>
<div class="a" style="left:1226px;top:357px;width:53px;height:15px;background:#E6E6E7;"></div>
<div class="a" style="left:1329px;top:345px;width:25px;height:25px;background:#F0F0F0;border-radius:50%"></div>
<svg class="a" style="left:1334px;top:351px" width="16" height="13" viewBox="0 0 16 13"><path d="M0 6.3 C3 -1.8 13 -1.8 16 6.3 C13 14.4 3 14.4 0 6.3 Z" fill="#7D97B6"/><circle cx="8" cy="6.3" r="4.2" fill="#fff" fill-opacity="0.9"/><circle cx="8" cy="6.3" r="3" fill="#7D97B6"/><path d="M5.6 6 A2.6 2.6 0 0 1 7.8 3.7 L7.8 6 Z" fill="#fff" fill-opacity="0.9"/></svg>
<div class="a" style="left:1359px;top:345px;width:25px;height:25px;background:#7D97B6;border-radius:50%"></div>
<svg class="a" style="left:1364px;top:350.5px" width="16" height="15" viewBox="0 0 16 15"><rect x="5" y="0.5" width="10" height="9.5" rx="1.5" fill="#fff"/><path d="M3.5 4.5 L1.8 4.5 Q0.8 4.5 0.8 5.5 L0.8 13 Q0.8 14 1.8 14 L9 14 Q10 14 10 13 L10 11.5" fill="none" stroke="#fff" stroke-width="1.6"/></svg>
<div class="a" style="left:253px;top:390.5px;width:14px;height:14px;background:transparent;border:2px solid #5F5F5F;border-radius:2px"></div>
<div class="t" style="left:286.40px;top:390.15px;font-size:14px;line-height:14px;color:#1A1A1A;font-weight:400;font-style:normal;letter-spacing:0.000px;">1</div>
<div class="t" style="left:392.70px;top:390.15px;font-size:14px;line-height:14px;color:#1A1A1A;font-weight:400;font-style:normal;letter-spacing:0.000px;transform:scaleX(0.9000);transform-origin:1px 0;">PS</div>
<div class="t" style="left:532.00px;top:390.15px;font-size:14px;line-height:14px;color:#1A1A1A;font-weight:400;font-style:normal;letter-spacing:-0.278px;">CONSULTANT</div>
<div class="t" style="left:675.50px;top:390.15px;font-size:14px;line-height:14px;color:#1A1A1A;font-weight:400;font-style:normal;letter-spacing:0.444px;">Consultant</div>
<div class="t" style="left:985.70px;top:390.15px;font-size:14px;line-height:14px;color:#1A1A1A;font-weight:400;font-style:normal;letter-spacing:0.275px;">500094262</div>
<div class="t" style="left:1091.90px;top:390.15px;font-size:14px;line-height:14px;color:#1A1A1A;font-weight:400;font-style:normal;letter-spacing:0.150px;">1,000</div>
<svg class="a" style="left:852px;top:402px" width="10" height="10" viewBox="0 0 10 10"><path d="M8.5 5.5 L8.5 9 Q8.5 9.5 8 9.5 L1 9.5 Q0.5 9.5 0.5 9 L0.5 2 Q0.5 1.5 1 1.5 L4.5 1.5" fill="none" stroke="#C5CFDB" stroke-width="1.1"/><path d="M3.5 7 L3.8 5 L8.3 0.5 L9.9 2.1 L5.4 6.6 Z" fill="#C5CFDB"/></svg>
<svg class="a" style="left:964px;top:402px" width="10" height="10" viewBox="0 0 10 10"><path d="M8.5 5.5 L8.5 9 Q8.5 9.5 8 9.5 L1 9.5 Q0.5 9.5 0.5 9 L0.5 2 Q0.5 1.5 1 1.5 L4.5 1.5" fill="none" stroke="#C5CFDB" stroke-width="1.1"/><path d="M3.5 7 L3.8 5 L8.3 0.5 L9.9 2.1 L5.4 6.6 Z" fill="#C5CFDB"/></svg>
<svg class="a" style="left:1133px;top:402px" width="10" height="10" viewBox="0 0 10 10"><path d="M8.5 5.5 L8.5 9 Q8.5 9.5 8 9.5 L1 9.5 Q0.5 9.5 0.5 9 L0.5 2 Q0.5 1.5 1 1.5 L4.5 1.5" fill="none" stroke="#C5CFDB" stroke-width="1.1"/><path d="M3.5 7 L3.8 5 L8.3 0.5 L9.9 2.1 L5.4 6.6 Z" fill="#C5CFDB"/></svg>
<svg class="a" style="left:1283px;top:402px" width="10" height="10" viewBox="0 0 10 10"><path d="M8.5 5.5 L8.5 9 Q8.5 9.5 8 9.5 L1 9.5 Q0.5 9.5 0.5 9 L0.5 2 Q0.5 1.5 1 1.5 L4.5 1.5" fill="none" stroke="#C5CFDB" stroke-width="1.1"/><path d="M3.5 7 L3.8 5 L8.3 0.5 L9.9 2.1 L5.4 6.6 Z" fill="#C5CFDB"/></svg>
<div class="a" style="left:1234px;top:387px;width:45px;height:15px;background:#C9CFD3;"></div>
<div class="a" style="left:1329px;top:385px;width:25px;height:25px;background:#F0F0F0;border-radius:50%"></div>
<svg class="a" style="left:1334px;top:391px" width="16" height="13" viewBox="0 0 16 13"><path d="M0 6.3 C3 -1.8 13 -1.8 16 6.3 C13 14.4 3 14.4 0 6.3 Z" fill="#7D97B6"/><circle cx="8" cy="6.3" r="4.2" fill="#fff" fill-opacity="0.9"/><circle cx="8" cy="6.3" r="3" fill="#7D97B6"/><path d="M5.6 6 A2.6 2.6 0 0 1 7.8 3.7 L7.8 6 Z" fill="#fff" fill-opacity="0.9"/></svg>
<div class="a" style="left:1359px;top:385px;width:25px;height:25px;background:#7D97B6;border-radius:50%"></div>
<svg class="a" style="left:1364px;top:390.5px" width="16" height="15" viewBox="0 0 16 15"><rect x="5" y="0.5" width="10" height="9.5" rx="1.5" fill="#fff"/><path d="M3.5 4.5 L1.8 4.5 Q0.8 4.5 0.8 5.5 L0.8 13 Q0.8 14 1.8 14 L9 14 Q10 14 10 13 L10 11.5" fill="none" stroke="#fff" stroke-width="1.6"/></svg>
<div class="a" style="left:253px;top:430.5px;width:14px;height:14px;background:transparent;border:2px solid #5F5F5F;border-radius:2px"></div>
<div class="t" style="left:286.40px;top:430.15px;font-size:14px;line-height:14px;color:#1A1A1A;font-weight:400;font-style:normal;letter-spacing:0.000px;">2</div>
<div class="t" style="left:392.70px;top:430.15px;font-size:14px;line-height:14px;color:#1A1A1A;font-weight:400;font-style:normal;letter-spacing:0.000px;transform:scaleX(0.9000);transform-origin:1px 0;">PS</div>
<div class="t" style="left:532.00px;top:430.15px;font-size:14px;line-height:14px;color:#1A1A1A;font-weight:400;font-style:normal;letter-spacing:0.000px;transform:scaleX(0.8857);transform-origin:1px 0;">CHEF DE PROJET</div>
<div class="t" style="left:675.50px;top:430.15px;font-size:14px;line-height:14px;color:#1A1A1A;font-weight:400;font-style:normal;letter-spacing:0.415px;">Chef de projet</div>
<div class="t" style="left:985.70px;top:430.15px;font-size:14px;line-height:14px;color:#1A1A1A;font-weight:400;font-style:normal;letter-spacing:0.275px;">500093823</div>
<div class="t" style="left:1083.70px;top:430.15px;font-size:14px;line-height:14px;color:#1A1A1A;font-weight:400;font-style:normal;letter-spacing:0.360px;">10,000</div>
<svg class="a" style="left:852px;top:442px" width="10" height="10" viewBox="0 0 10 10"><path d="M8.5 5.5 L8.5 9 Q8.5 9.5 8 9.5 L1 9.5 Q0.5 9.5 0.5 9 L0.5 2 Q0.5 1.5 1 1.5 L4.5 1.5" fill="none" stroke="#C5CFDB" stroke-width="1.1"/><path d="M3.5 7 L3.8 5 L8.3 0.5 L9.9 2.1 L5.4 6.6 Z" fill="#C5CFDB"/></svg>
<svg class="a" style="left:964px;top:442px" width="10" height="10" viewBox="0 0 10 10"><path d="M8.5 5.5 L8.5 9 Q8.5 9.5 8 9.5 L1 9.5 Q0.5 9.5 0.5 9 L0.5 2 Q0.5 1.5 1 1.5 L4.5 1.5" fill="none" stroke="#C5CFDB" stroke-width="1.1"/><path d="M3.5 7 L3.8 5 L8.3 0.5 L9.9 2.1 L5.4 6.6 Z" fill="#C5CFDB"/></svg>
<svg class="a" style="left:1133px;top:442px" width="10" height="10" viewBox="0 0 10 10"><path d="M8.5 5.5 L8.5 9 Q8.5 9.5 8 9.5 L1 9.5 Q0.5 9.5 0.5 9 L0.5 2 Q0.5 1.5 1 1.5 L4.5 1.5" fill="none" stroke="#C5CFDB" stroke-width="1.1"/><path d="M3.5 7 L3.8 5 L8.3 0.5 L9.9 2.1 L5.4 6.6 Z" fill="#C5CFDB"/></svg>
<svg class="a" style="left:1283px;top:442px" width="10" height="10" viewBox="0 0 10 10"><path d="M8.5 5.5 L8.5 9 Q8.5 9.5 8 9.5 L1 9.5 Q0.5 9.5 0.5 9 L0.5 2 Q0.5 1.5 1 1.5 L4.5 1.5" fill="none" stroke="#C5CFDB" stroke-width="1.1"/><path d="M3.5 7 L3.8 5 L8.3 0.5 L9.9 2.1 L5.4 6.6 Z" fill="#C5CFDB"/></svg>
<div class="a" style="left:1234px;top:432px;width:15px;height:15px;background:#EEEFEF;"></div>
<div class="a" style="left:1249px;top:432px;width:15px;height:15px;background:#DFDBDB;"></div>
<div class="a" style="left:1264px;top:432px;width:15px;height:15px;background:#CBD0D4;"></div>
<div class="a" style="left:1329px;top:425px;width:25px;height:25px;background:#F0F0F0;border-radius:50%"></div>
<svg class="a" style="left:1334px;top:431px" width="16" height="13" viewBox="0 0 16 13"><path d="M0 6.3 C3 -1.8 13 -1.8 16 6.3 C13 14.4 3 14.4 0 6.3 Z" fill="#7D97B6"/><circle cx="8" cy="6.3" r="4.2" fill="#fff" fill-opacity="0.9"/><circle cx="8" cy="6.3" r="3" fill="#7D97B6"/><path d="M5.6 6 A2.6 2.6 0 0 1 7.8 3.7 L7.8 6 Z" fill="#fff" fill-opacity="0.9"/></svg>
<div class="a" style="left:1359px;top:425px;width:25px;height:25px;background:#7D97B6;border-radius:50%"></div>
<svg class="a" style="left:1364px;top:430.5px" width="16" height="15" viewBox="0 0 16 15"><rect x="5" y="0.5" width="10" height="9.5" rx="1.5" fill="#fff"/><path d="M3.5 4.5 L1.8 4.5 Q0.8 4.5 0.8 5.5 L0.8 13 Q0.8 14 1.8 14 L9 14 Q10 14 10 13 L10 11.5" fill="none" stroke="#fff" stroke-width="1.6"/></svg>
<div class="a" style="left:253px;top:470.5px;width:14px;height:14px;background:transparent;border:2px solid #5F5F5F;border-radius:2px"></div>
<div class="t" style="left:286.40px;top:470.15px;font-size:14px;line-height:14px;color:#1A1A1A;font-weight:400;font-style:normal;letter-spacing:0.000px;">2</div>
<div class="t" style="left:392.70px;top:470.15px;font-size:14px;line-height:14px;color:#1A1A1A;font-weight:400;font-style:normal;letter-spacing:0.000px;transform:scaleX(0.9000);transform-origin:1px 0;">PS</div>
<div class="t" style="left:532.00px;top:470.15px;font-size:14px;line-height:14px;color:#1A1A1A;font-weight:400;font-style:normal;letter-spacing:-0.278px;">CONSULTANT</div>
<div class="t" style="left:675.50px;top:470.15px;font-size:14px;line-height:14px;color:#1A1A1A;font-weight:400;font-style:normal;letter-spacing:0.444px;">Consultant</div>
<div class="t" style="left:985.70px;top:470.15px;font-size:14px;line-height:14px;color:#1A1A1A;font-weight:400;font-style:normal;letter-spacing:0.275px;">500094263</div>
<div class="t" style="left:1092.00px;top:470.15px;font-size:14px;line-height:14px;color:#1A1A1A;font-weight:400;font-style:normal;letter-spacing:0.125px;">0,500</div>
<svg class="a" style="left:852px;top:482px" width="10" height="10" viewBox="0 0 10 10"><path d="M8.5 5.5 L8.5 9 Q8.5 9.5 8 9.5 L1 9.5 Q0.5 9.5 0.5 9 L0.5 2 Q0.5 1.5 1 1.5 L4.5 1.5" fill="none" stroke="#C5CFDB" stroke-width="1.1"/><path d="M3.5 7 L3.8 5 L8.3 0.5 L9.9 2.1 L5.4 6.6 Z" fill="#C5CFDB"/></svg>
<svg class="a" style="left:964px;top:482px" width="10" height="10" viewBox="0 0 10 10"><path d="M8.5 5.5 L8.5 9 Q8.5 9.5 8 9.5 L1 9.5 Q0.5 9.5 0.5 9 L0.5 2 Q0.5 1.5 1 1.5 L4.5 1.5" fill="none" stroke="#C5CFDB" stroke-width="1.1"/><path d="M3.5 7 L3.8 5 L8.3 0.5 L9.9 2.1 L5.4 6.6 Z" fill="#C5CFDB"/></svg>
<svg class="a" style="left:1133px;top:482px" width="10" height="10" viewBox="0 0 10 10"><path d="M8.5 5.5 L8.5 9 Q8.5 9.5 8 9.5 L1 9.5 Q0.5 9.5 0.5 9 L0.5 2 Q0.5 1.5 1 1.5 L4.5 1.5" fill="none" stroke="#C5CFDB" stroke-width="1.1"/><path d="M3.5 7 L3.8 5 L8.3 0.5 L9.9 2.1 L5.4 6.6 Z" fill="#C5CFDB"/></svg>
<svg class="a" style="left:1283px;top:482px" width="10" height="10" viewBox="0 0 10 10"><path d="M8.5 5.5 L8.5 9 Q8.5 9.5 8 9.5 L1 9.5 Q0.5 9.5 0.5 9 L0.5 2 Q0.5 1.5 1 1.5 L4.5 1.5" fill="none" stroke="#C5CFDB" stroke-width="1.1"/><path d="M3.5 7 L3.8 5 L8.3 0.5 L9.9 2.1 L5.4 6.6 Z" fill="#C5CFDB"/></svg>
<div class="a" style="left:1234px;top:462px;width:45px;height:30px;background:#D9E1E4;"></div>
<div class="a" style="left:1329px;top:465px;width:25px;height:25px;background:#F0F0F0;border-radius:50%"></div>
<svg class="a" style="left:1334px;top:471px" width="16" height="13" viewBox="0 0 16 13"><path d="M0 6.3 C3 -1.8 13 -1.8 16 6.3 C13 14.4 3 14.4 0 6.3 Z" fill="#7D97B6"/><circle cx="8" cy="6.3" r="4.2" fill="#fff" fill-opacity="0.9"/><circle cx="8" cy="6.3" r="3" fill="#7D97B6"/><path d="M5.6 6 A2.6 2.6 0 0 1 7.8 3.7 L7.8 6 Z" fill="#fff" fill-opacity="0.9"/></svg>
<div class="a" style="left:1359px;top:465px;width:25px;height:25px;background:#7D97B6;border-radius:50%"></div>
<svg class="a" style="left:1364px;top:470.5px" width="16" height="15" viewBox="0 0 16 15"><rect x="5" y="0.5" width="10" height="9.5" rx="1.5" fill="#fff"/><path d="M3.5 4.5 L1.8 4.5 Q0.8 4.5 0.8 5.5 L0.8 13 Q0.8 14 1.8 14 L9 14 Q10 14 10 13 L10 11.5" fill="none" stroke="#fff" stroke-width="1.6"/></svg>
<div class="a" style="left:253px;top:510.5px;width:14px;height:14px;background:transparent;border:2px solid #5F5F5F;border-radius:2px"></div>
<div class="t" style="left:286.40px;top:510.15px;font-size:14px;line-height:14px;color:#1A1A1A;font-weight:400;font-style:normal;letter-spacing:0.000px;">3</div>
<div class="t" style="left:392.70px;top:510.15px;font-size:14px;line-height:14px;color:#1A1A1A;font-weight:400;font-style:normal;letter-spacing:0.000px;transform:scaleX(0.9000);transform-origin:1px 0;">PS</div>
<div class="t" style="left:532.00px;top:510.15px;font-size:14px;line-height:14px;color:#1A1A1A;font-weight:400;font-style:normal;letter-spacing:0.000px;transform:scaleX(0.8857);transform-origin:1px 0;">CHEF DE PROJET</div>
<div class="t" style="left:675.50px;top:510.15px;font-size:14px;line-height:14px;color:#1A1A1A;font-weight:400;font-style:normal;letter-spacing:0.415px;">Chef de projet</div>
<div class="t" style="left:985.70px;top:510.15px;font-size:14px;line-height:14px;color:#1A1A1A;font-weight:400;font-style:normal;letter-spacing:0.275px;">500093821</div>
<div class="t" style="left:1076.00px;top:510.15px;font-size:14px;line-height:14px;color:#1A1A1A;font-weight:400;font-style:normal;letter-spacing:0.250px;">100,000</div>
<svg class="a" style="left:852px;top:522px" width="10" height="10" viewBox="0 0 10 10"><path d="M8.5 5.5 L8.5 9 Q8.5 9.5 8 9.5 L1 9.5 Q0.5 9.5 0.5 9 L0.5 2 Q0.5 1.5 1 1.5 L4.5 1.5" fill="none" stroke="#C5CFDB" stroke-width="1.1"/><path d="M3.5 7 L3.8 5 L8.3 0.5 L9.9 2.1 L5.4 6.6 Z" fill="#C5CFDB"/></svg>
<svg class="a" style="left:964px;top:522px" width="10" height="10" viewBox="0 0 10 10"><path d="M8.5 5.5 L8.5 9 Q8.5 9.5 8 9.5 L1 9.5 Q0.5 9.5 0.5 9 L0.5 2 Q0.5 1.5 1 1.5 L4.5 1.5" fill="none" stroke="#C5CFDB" stroke-width="1.1"/><path d="M3.5 7 L3.8 5 L8.3 0.5 L9.9 2.1 L5.4 6.6 Z" fill="#C5CFDB"/></svg>
<svg class="a" style="left:1133px;top:522px" width="10" height="10" viewBox="0 0 10 10"><path d="M8.5 5.5 L8.5 9 Q8.5 9.5 8 9.5 L1 9.5 Q0.5 9.5 0.5 9 L0.5 2 Q0.5 1.5 1 1.5 L4.5 1.5" fill="none" stroke="#C5CFDB" stroke-width="1.1"/><path d="M3.5 7 L3.8 5 L8.3 0.5 L9.9 2.1 L5.4 6.6 Z" fill="#C5CFDB"/></svg>
<svg class="a" style="left:1283px;top:522px" width="10" height="10" viewBox="0 0 10 10"><path d="M8.5 5.5 L8.5 9 Q8.5 9.5 8 9.5 L1 9.5 Q0.5 9.5 0.5 9 L0.5 2 Q0.5 1.5 1 1.5 L4.5 1.5" fill="none" stroke="#C5CFDB" stroke-width="1.1"/><path d="M3.5 7 L3.8 5 L8.3 0.5 L9.9 2.1 L5.4 6.6 Z" fill="#C5CFDB"/></svg>
<div class="a" style="left:1234px;top:507px;width:15px;height:15px;background:#D3D1CE;"></div>
<div class="a" style="left:1249px;top:507px;width:15px;height:15px;background:#D3D0D2;"></div>
<div class="a" style="left:1264px;top:507px;width:15px;height:15px;background:#C9CCCE;"></div>
<div class="a" style="left:1329px;top:505px;width:25px;height:25px;background:#F0F0F0;border-radius:50%"></div>
<svg class="a" style="left:1334px;top:511px" width="16" height="13" viewBox="0 0 16 13"><path d="M0 6.3 C3 -1.8 13 -1.8 16 6.3 C13 14.4 3 14.4 0 6.3 Z" fill="#7D97B6"/><circle cx="8" cy="6.3" r="4.2" fill="#fff" fill-opacity="0.9"/><circle cx="8" cy="6.3" r="3" fill="#7D97B6"/><path d="M5.6 6 A2.6 2.6 0 0 1 7.8 3.7 L7.8 6 Z" fill="#fff" fill-opacity="0.9"/></svg>
<div class="a" style="left:1359px;top:505px;width:25px;height:25px;background:#7D97B6;border-radius:50%"></div>
<svg class="a" style="left:1364px;top:510.5px" width="16" height="15" viewBox="0 0 16 15"><rect x="5" y="0.5" width="10" height="9.5" rx="1.5" fill="#fff"/><path d="M3.5 4.5 L1.8 4.5 Q0.8 4.5 0.8 5.5 L0.8 13 Q0.8 14 1.8 14 L9 14 Q10 14 10 13 L10 11.5" fill="none" stroke="#fff" stroke-width="1.6"/></svg>
<div class="a" style="left:253px;top:550.5px;width:14px;height:14px;background:transparent;border:2px solid #5F5F5F;border-radius:2px"></div>
<div class="t" style="left:287.40px;top:550.15px;font-size:14px;line-height:14px;color:#1A1A1A;font-weight:400;font-style:normal;letter-spacing:0.000px;">4</div>
<div class="t" style="left:392.70px;top:550.15px;font-size:14px;line-height:14px;color:#1A1A1A;font-weight:400;font-style:normal;letter-spacing:0.000px;transform:scaleX(0.8789);transform-origin:1px 0;">CC</div>
<div class="t" style="left:532.00px;top:550.15px;font-size:14px;line-height:14px;color:#1A1A1A;font-weight:400;font-style:normal;letter-spacing:0.000px;transform:scaleX(0.9256);transform-origin:1px 0;">1-HELPDESK</div>
<div class="t" style="left:675.50px;top:550.15px;font-size:14px;line-height:14px;color:#1A1A1A;font-weight:400;font-style:normal;letter-spacing:0.246px;">Helpdesk Individualisé (...</div>
<div class="t" style="left:873.00px;top:550.15px;font-size:14px;line-height:14px;color:#1A1A1A;font-weight:400;font-style:normal;letter-spacing:0.867px;">gbds</div>
<div class="t" style="left:985.70px;top:550.15px;font-size:14px;line-height:14px;color:#1A1A1A;font-weight:400;font-style:normal;letter-spacing:0.275px;">500093822</div>
<div class="t" style="left:1111.30px;top:550.15px;font-size:14px;line-height:14px;color:#1A1A1A;font-weight:400;font-style:normal;letter-spacing:1.200px;">10</div>
<svg class="a" style="left:852px;top:562px" width="10" height="10" viewBox="0 0 10 10"><path d="M8.5 5.5 L8.5 9 Q8.5 9.5 8 9.5 L1 9.5 Q0.5 9.5 0.5 9 L0.5 2 Q0.5 1.5 1 1.5 L4.5 1.5" fill="none" stroke="#C5CFDB" stroke-width="1.1"/><path d="M3.5 7 L3.8 5 L8.3 0.5 L9.9 2.1 L5.4 6.6 Z" fill="#C5CFDB"/></svg>
<svg class="a" style="left:964px;top:562px" width="10" height="10" viewBox="0 0 10 10"><path d="M8.5 5.5 L8.5 9 Q8.5 9.5 8 9.5 L1 9.5 Q0.5 9.5 0.5 9 L0.5 2 Q0.5 1.5 1 1.5 L4.5 1.5" fill="none" stroke="#C5CFDB" stroke-width="1.1"/><path d="M3.5 7 L3.8 5 L8.3 0.5 L9.9 2.1 L5.4 6.6 Z" fill="#C5CFDB"/></svg>
<svg class="a" style="left:1133px;top:562px" width="10" height="10" viewBox="0 0 10 10"><path d="M8.5 5.5 L8.5 9 Q8.5 9.5 8 9.5 L1 9.5 Q0.5 9.5 0.5 9 L0.5 2 Q0.5 1.5 1 1.5 L4.5 1.5" fill="none" stroke="#C5CFDB" stroke-width="1.1"/><path d="M3.5 7 L3.8 5 L8.3 0.5 L9.9 2.1 L5.4 6.6 Z" fill="#C5CFDB"/></svg>
<svg class="a" style="left:1283px;top:562px" width="10" height="10" viewBox="0 0 10 10"><path d="M8.5 5.5 L8.5 9 Q8.5 9.5 8 9.5 L1 9.5 Q0.5 9.5 0.5 9 L0.5 2 Q0.5 1.5 1 1.5 L4.5 1.5" fill="none" stroke="#C5CFDB" stroke-width="1.1"/><path d="M3.5 7 L3.8 5 L8.3 0.5 L9.9 2.1 L5.4 6.6 Z" fill="#C5CFDB"/></svg>
<div class="a" style="left:1234px;top:552px;width:15px;height:15px;background:#DEE8EB;"></div>
<div class="a" style="left:1249px;top:552px;width:15px;height:15px;background:#CED5D8;"></div>
<div class="a" style="left:1264px;top:552px;width:15px;height:15px;background:#C2CBD2;"></div>
<div class="a" style="left:1329px;top:545px;width:25px;height:25px;background:#F0F0F0;border-radius:50%"></div>
<svg class="a" style="left:1334px;top:551px" width="16" height="13" viewBox="0 0 16 13"><path d="M0 6.3 C3 -1.8 13 -1.8 16 6.3 C13 14.4 3 14.4 0 6.3 Z" fill="#7D97B6"/><circle cx="8" cy="6.3" r="4.2" fill="#fff" fill-opacity="0.9"/><circle cx="8" cy="6.3" r="3" fill="#7D97B6"/><path d="M5.6 6 A2.6 2.6 0 0 1 7.8 3.7 L7.8 6 Z" fill="#fff" fill-opacity="0.9"/></svg>
<div class="a" style="left:1359px;top:545px;width:25px;height:25px;background:#7D97B6;border-radius:50%"></div>
<svg class="a" style="left:1364px;top:550.5px" width="16" height="15" viewBox="0 0 16 15"><rect x="5" y="0.5" width="10" height="9.5" rx="1.5" fill="#fff"/><path d="M3.5 4.5 L1.8 4.5 Q0.8 4.5 0.8 5.5 L0.8 13 Q0.8 14 1.8 14 L9 14 Q10 14 10 13 L10 11.5" fill="none" stroke="#fff" stroke-width="1.6"/></svg>
<div class="a" style="left:253px;top:590.5px;width:14px;height:14px;background:transparent;border:2px solid #5F5F5F;border-radius:2px"></div>
<div class="t" style="left:286.40px;top:590.85px;font-size:14px;line-height:14px;color:#1A1A1A;font-weight:400;font-style:normal;letter-spacing:0.000px;">5</div>
<div class="t" style="left:393.70px;top:590.85px;font-size:14px;line-height:14px;color:#1A1A1A;font-weight:400;font-style:normal;letter-spacing:0.000px;transform:scaleX(0.8979);transform-origin:0px 0;">TEST RETENUE GAR</div>
<div class="t" style="left:532.00px;top:590.85px;font-size:14px;line-height:14px;color:#1A1A1A;font-weight:400;font-style:normal;letter-spacing:0.000px;transform:scaleX(0.9206);transform-origin:1px 0;">RETENUE GARANTIE</div>
<div class="t" style="left:675.50px;top:590.85px;font-size:14px;line-height:14px;color:#1A1A1A;font-weight:400;font-style:normal;letter-spacing:0.350px;">Retenue de garantie</div>
<div class="t" style="left:985.70px;top:590.85px;font-size:14px;line-height:14px;color:#1A1A1A;font-weight:400;font-style:normal;letter-spacing:0.275px;">500095190</div>
<div class="t" style="left:1092.50px;top:590.85px;font-size:14px;line-height:14px;color:#1A1A1A;font-weight:400;font-style:normal;letter-spacing:0.000px;">0,000</div>
<svg class="a" style="left:852px;top:602px" width="10" height="10" viewBox="0 0 10 10"><path d="M8.5 5.5 L8.5 9 Q8.5 9.5 8 9.5 L1 9.5 Q0.5 9.5 0.5 9 L0.5 2 Q0.5 1.5 1 1.5 L4.5 1.5" fill="none" stroke="#C5CFDB" stroke-width="1.1"/><path d="M3.5 7 L3.8 5 L8.3 0.5 L9.9 2.1 L5.4 6.6 Z" fill="#C5CFDB"/></svg>
<svg class="a" style="left:964px;top:602px" width="10" height="10" viewBox="0 0 10 10"><path d="M8.5 5.5 L8.5 9 Q8.5 9.5 8 9.5 L1 9.5 Q0.5 9.5 0.5 9 L0.5 2 Q0.5 1.5 1 1.5 L4.5 1.5" fill="none" stroke="#C5CFDB" stroke-width="1.1"/><path d="M3.5 7 L3.8 5 L8.3 0.5 L9.9 2.1 L5.4 6.6 Z" fill="#C5CFDB"/></svg>
<svg class="a" style="left:1133px;top:602px" width="10" height="10" viewBox="0 0 10 10"><path d="M8.5 5.5 L8.5 9 Q8.5 9.5 8 9.5 L1 9.5 Q0.5 9.5 0.5 9 L0.5 2 Q0.5 1.5 1 1.5 L4.5 1.5" fill="none" stroke="#C5CFDB" stroke-width="1.1"/><path d="M3.5 7 L3.8 5 L8.3 0.5 L9.9 2.1 L5.4 6.6 Z" fill="#C5CFDB"/></svg>
<svg class="a" style="left:1283px;top:602px" width="10" height="10" viewBox="0 0 10 10"><path d="M8.5 5.5 L8.5 9 Q8.5 9.5 8 9.5 L1 9.5 Q0.5 9.5 0.5 9 L0.5 2 Q0.5 1.5 1 1.5 L4.5 1.5" fill="none" stroke="#C5CFDB" stroke-width="1.1"/><path d="M3.5 7 L3.8 5 L8.3 0.5 L9.9 2.1 L5.4 6.6 Z" fill="#C5CFDB"/></svg>
<div class="a" style="left:1249px;top:582px;width:30px;height:14px;background:#EDECEC;"></div>
<div class="a" style="left:1249px;top:596px;width:30px;height:8px;background:#C4C3C5;"></div>
<div class="a" style="left:1329px;top:585px;width:25px;height:25px;background:#F0F0F0;border-radius:50%"></div>
<svg class="a" style="left:1334px;top:591px" width="16" height="13" viewBox="0 0 16 13"><path d="M0 6.3 C3 -1.8 13 -1.8 16 6.3 C13 14.4 3 14.4 0 6.3 Z" fill="#7D97B6"/><circle cx="8" cy="6.3" r="4.2" fill="#fff" fill-opacity="0.9"/><circle cx="8" cy="6.3" r="3" fill="#7D97B6"/><path d="M5.6 6 A2.6 2.6 0 0 1 7.8 3.7 L7.8 6 Z" fill="#fff" fill-opacity="0.9"/></svg>
<div class="a" style="left:1359px;top:585px;width:25px;height:25px;background:#7D97B6;border-radius:50%"></div>
<svg class="a" style="left:1364px;top:590.5px" width="16" height="15" viewBox="0 0 16 15"><rect x="5" y="0.5" width="10" height="9.5" rx="1.5" fill="#fff"/><path d="M3.5 4.5 L1.8 4.5 Q0.8 4.5 0.8 5.5 L0.8 13 Q0.8 14 1.8 14 L9 14 Q10 14 10 13 L10 11.5" fill="none" stroke="#fff" stroke-width="1.6"/></svg>
<div class="t" style="left:286.10px;top:632.25px;font-size:14px;line-height:14px;color:#222;font-weight:400;font-style:normal;letter-spacing:0.407px;">Total sélection</div>
<div class="t" style="left:286.10px;top:670.75px;font-size:14px;line-height:14px;color:#222;font-weight:400;font-style:normal;letter-spacing:0.775px;">Total</div>
<div class="t" style="left:1097.40px;top:670.95px;font-size:14px;line-height:14px;color:#222;font-weight:400;font-style:normal;letter-spacing:0.380px;">121,50</div>
<div class="a" style="left:979px;top:306px;width:90px;height:314px;background:transparent;border:2px solid #FF0000;box-shadow:3px 3px 4px rgba(0,0,0,0.33), inset 3px 3px 4px rgba(0,0,0,0.28)"></div>
<svg class="a" style="left:244px;top:701.5px" width="8" height="8" viewBox="0 0 8 8"><path d="M7.5 0 L7.5 8 L0 4 Z" fill="#8A8A8A"/></svg>
<div class="a" style="left:258px;top:701px;width:304px;height:9px;background:#898989;border-radius:5px"></div>
<svg class="a" style="left:1378px;top:701px" width="8" height="9" viewBox="0 0 8 9"><path d="M0.5 0.5 L0.5 8.5 L7.5 4.5 Z" fill="#8A8A8A" stroke="#8A8A8A" stroke-width="0.8" stroke-linejoin="round"/></svg>
<div class="t" style="left:877.20px;top:736.30px;font-size:13px;line-height:13px;color:#333;font-weight:400;font-style:normal;letter-spacing:0.194px;">Nb lignes / page :</div>
<div class="a" style="left:989px;top:723px;width:84px;height:40px;background:#fff;border:1px solid #9A9A9A;border-radius:4px"></div>
<div class="t" style="left:1004.50px;top:736.30px;font-size:13px;line-height:13px;color:#333;font-weight:400;font-style:normal;letter-spacing:0.000px;">100</div>
<svg class="a" style="left:1046.5px;top:741px" width="11" height="5" viewBox="0 0 11 5"><path d="M0 0 L11 0 L5.5 5 Z" fill="#666"/></svg>
<div class="t" style="left:1109.00px;top:736.30px;font-size:13px;line-height:13px;color:#333;font-weight:400;font-style:normal;letter-spacing:-0.178px;">Page 1 / 1</div>
<svg class="a" style="left:1217px;top:737px" width="14" height="12" viewBox="0 0 14 12"><rect x="0.8" y="0" width="2" height="12" fill="#9A9A9A"/><polyline points="13,1 7.5,6 13,11" fill="none" stroke="#9A9A9A" stroke-width="1.9"/></svg>
<svg class="a" style="left:1267px;top:737px" width="9" height="12" viewBox="0 0 9 12"><polyline points="8,1 2.5,6 8,11" fill="none" stroke="#9A9A9A" stroke-width="1.9"/></svg>
<svg class="a" style="left:1316px;top:737px" width="9" height="12" viewBox="0 0 9 12"><polyline points="1,1 6.5,6 1,11" fill="none" stroke="#9A9A9A" stroke-width="1.9"/></svg>
<svg class="a" style="left:1361px;top:737px" width="14" height="12" viewBox="0 0 14 12"><polyline points="1,1 6.5,6 1,11" fill="none" stroke="#9A9A9A" stroke-width="1.9"/><rect x="11" y="0" width="2" height="12" fill="#9A9A9A"/></svg>
</body></html>
